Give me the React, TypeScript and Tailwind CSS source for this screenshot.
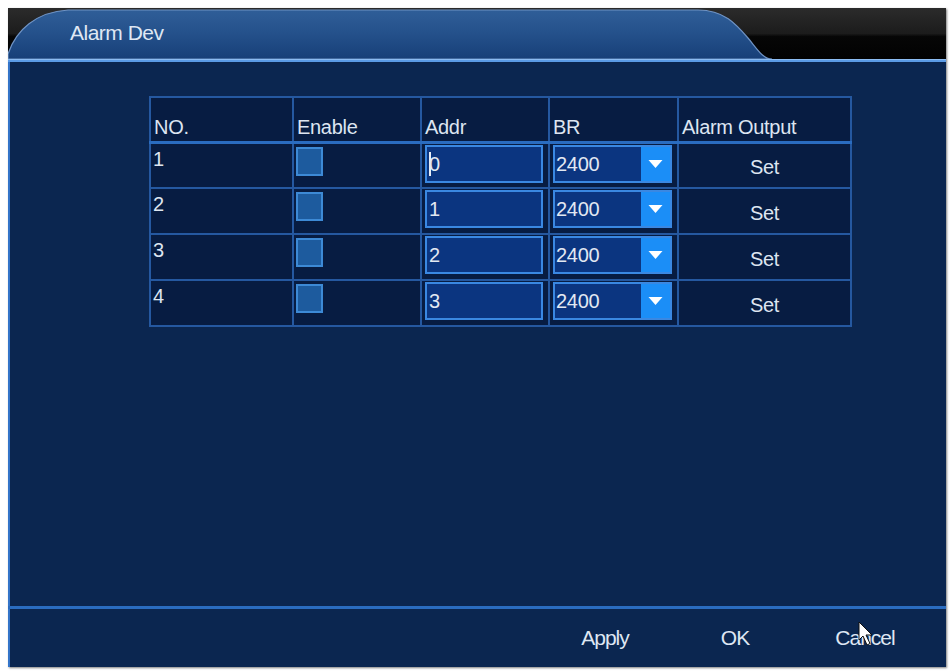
import { useState } from 'react'

const rows = [
    { no: '1', addr: '0', br: '2400' },
    { no: '2', addr: '1', br: '2400' },
    { no: '3', addr: '2', br: '2400' },
    { no: '4', addr: '3', br: '2400' },
]

const font = { fontFamily: '"Liberation Sans", Arial, sans-serif' }

function TabShape() {
    return (
        <svg className="absolute inset-0" width="938" height="51" viewBox="0 0 938 51">
            <defs>
                <linearGradient id="bar" x1="0" y1="0" x2="0" y2="1">
                    <stop offset="0" stopColor="#2b2b2b" />
                    <stop offset="0.5" stopColor="#1c1c1c" />
                    <stop offset="0.56" stopColor="#060606" />
                    <stop offset="1" stopColor="#020202" />
                </linearGradient>
                <linearGradient id="tab" x1="0" y1="0" x2="0" y2="1">
                    <stop offset="0" stopColor="#2f5e98" />
                    <stop offset="0.5" stopColor="#24508a" />
                    <stop offset="1" stopColor="#173f78" />
                </linearGradient>
            </defs>
            <rect x="0" y="0" width="938" height="51" fill="url(#bar)" />
            <path
                d="M0 51 L0 46 C8 22 28 4 60 2 L690 2 C716 2 728 16 740 30 C750 42 755 51 764 51 Z"
                fill="url(#tab)"
                stroke="#6f93c4"
                strokeWidth="1.2"
            />
        </svg>
    )
}

function Checkbox() {
    const [on, setOn] = useState(false)
    return (
        <button
            onClick={() => setOn(!on)}
            className="mt-[3px] ml-[2px] w-[27px] h-[29px] border-2 border-[#3d8ad6] bg-[#1d5b9e] flex items-center justify-center"
        >
            {on && <span className="w-[13px] h-[13px] bg-white" />}
        </button>
    )
}

function Addr({ value, caret }: { value: string; caret?: boolean }) {
    return (
        <div className="mt-[1px] ml-[3px] w-[118px] h-[38px] border-2 border-[#3a88e2] bg-[#0b3580] flex items-center pl-[2px] text-[#e2e8f2]">
            {caret && <span className="w-[2px] h-[24px] bg-[#e8eef8] -mr-[2px]" />}
            <span>{value}</span>
        </div>
    )
}

function Rate({ value }: { value: string }) {
    return (
        <div className="mt-[1px] ml-[3px] w-[119px] h-[38px] border-2 border-[#3a88e2] bg-[#0b3580] flex text-[#e2e8f2]">
            <div className="flex-1 flex items-center pl-[1px]">{value}</div>
            <div className="w-[29px] bg-[#1b8ef7] flex items-center justify-center">
                <svg width="15" height="10" viewBox="0 0 15 10">
                    <path d="M0.5 1 L14.5 1 L7.5 9 Z" fill="#ffffff" />
                </svg>
            </div>
        </div>
    )
}

export default function App() {
    return (
        <div className="w-full h-[671px] bg-white pt-[8px] pl-[8px]" style={font}>
            <div className="relative w-[938px] h-[659px] flex flex-col bg-[#0b2650] shadow-[1px_1px_2px_rgba(0,0,0,0.5)]">
                <div className="relative h-[51px]">
                    <TabShape />
                    <div className="relative pl-[62px] pt-[13px] text-[21px] leading-[24px] tracking-[-0.5px] text-[#dfe7f3]">
                        Alarm Dev
                    </div>
                </div>
                <div className="h-[3px] bg-[#5b9be6] border-t border-[#8cbcf2]" />

                <div className="flex-1 border-l-2 border-[#3474c8] bg-[#0b2650] pt-[34px] pl-[139px]">
                    <table className="table-fixed border-collapse border-2 border-[#2558a0] text-[20px] leading-[24px] text-[#dde5f1] tracking-[-0.3px]">
                        <colgroup>
                            <col className="w-[143px]" />
                            <col className="w-[128px]" />
                            <col className="w-[128px]" />
                            <col className="w-[129px]" />
                            <col className="w-[173px]" />
                        </colgroup>
                        <thead>
                            <tr className="h-[45px] border-b-[3px] border-[#2a6cc0] bg-[#071c42]">
                                {['NO.', 'Enable', 'Addr', 'BR', 'Alarm Output'].map(h => (
                                    <th
                                        key={h}
                                        className="border-x-2 border-[#2558a0] align-bottom text-left font-normal pl-[3px] pb-[2px]"
                                    >
                                        {h}
                                    </th>
                                ))}
                            </tr>
                        </thead>
                        <tbody>
                            {rows.map((r, i) => (
                                <tr key={r.no} className="h-[46px] border-b-2 border-[#2558a0] bg-[#071c42]">
                                    <td className="border-x-2 border-[#2558a0] align-top pl-[2px] pt-[3px]">{r.no}</td>
                                    <td className="border-x-2 border-[#2558a0] align-top p-0">
                                        <Checkbox />
                                    </td>
                                    <td className="border-x-2 border-[#2558a0] align-top p-0">
                                        <Addr value={r.addr} caret={i === 0} />
                                    </td>
                                    <td className="border-x-2 border-[#2558a0] align-top p-0">
                                        <Rate value={r.br} />
                                    </td>
                                    <td className="border-x-2 border-[#2558a0] text-center align-middle pt-[3px]">Set</td>
                                </tr>
                            ))}
                        </tbody>
                    </table>
                </div>

                <div className="h-[3px] bg-[#2a6cc0]" />
                <div className="h-[58px] border-l-2 border-[#3474c8] bg-[#0b2650] flex justify-end items-center pr-[16px] text-[21px] tracking-[-1px] text-[#dfe7f3]">
                    <button className="w-[130px] text-center">Apply</button>
                    <button className="w-[130px] text-center">OK</button>
                    <button className="w-[130px] text-center">Cancel</button>
                </div>

                <svg className="absolute left-[850px] top-[613px]" width="16" height="26" viewBox="0 0 16 26">
                    <path d="M1 1 L1 19 L5 15 L9 24 L12 22.5 L8 14 L14 14 Z" fill="#ffffff" stroke="#111111" strokeWidth="1" />
                </svg>
            </div>
        </div>
    )
}
